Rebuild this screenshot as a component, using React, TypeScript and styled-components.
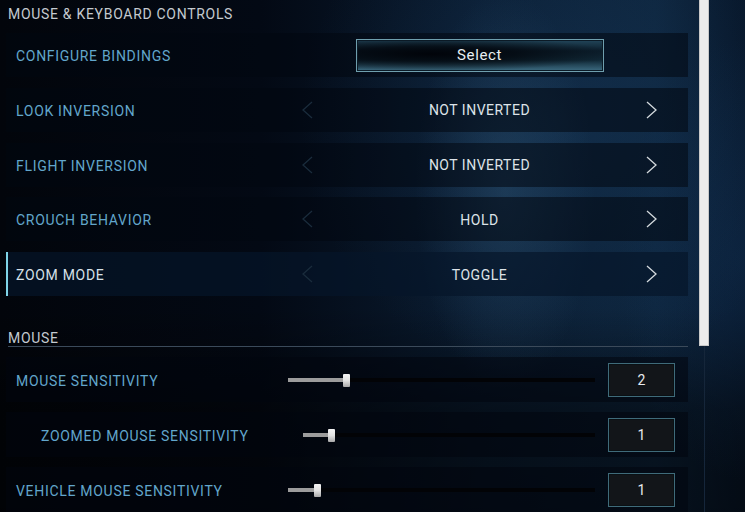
import React from "react"
import styled, { createGlobalStyle } from "styled-components"

const GlobalStyle = createGlobalStyle`
  html, body {
    margin: 0;
    padding: 0;
    background: #02050b;
  }
  * {
    box-sizing: border-box;
  }
`

type Selector = { label: string; value: string; active?: boolean }
type SliderSetting = { label: string; value: number; indent?: boolean }

const selectors: Selector[] = [
  { label: "LOOK INVERSION", value: "NOT INVERTED" },
  { label: "FLIGHT INVERSION", value: "NOT INVERTED" },
  { label: "CROUCH BEHAVIOR", value: "HOLD" },
  { label: "ZOOM MODE", value: "TOGGLE", active: true },
]

const sliders: SliderSetting[] = [
  { label: "MOUSE SENSITIVITY", value: 2 },
  { label: "ZOOMED MOUSE SENSITIVITY", value: 1, indent: true },
  { label: "VEHICLE MOUSE SENSITIVITY", value: 1 },
]

const Chevron = ({ dir, dim }: { dir: "left" | "right"; dim?: boolean }) => (
  <svg width="11" height="18" viewBox="0 0 11 18">
    <path
      d={dir === "right" ? "M1 1 L10 9 L1 17" : "M10 1 L1 9 L10 17"}
      fill="none"
      stroke={dim ? "#1a2c3c" : "#d4dade"}
      strokeWidth="1.3"
    />
  </svg>
)

const App = () => {
  return (
    <Page>
      <GlobalStyle />
      <Panel>
        <SectionTitle>MOUSE &amp; KEYBOARD CONTROLS</SectionTitle>
        <RowList>
          <Row>
            <Label>CONFIGURE BINDINGS</Label>
            <SelectButton>Select</SelectButton>
          </Row>
          {selectors.map((s) => (
            <Row key={s.label} $active={s.active}>
              <Label $active={s.active}>{s.label}</Label>
              <Chevron dir="left" dim />
              <Value>{s.value}</Value>
              <Chevron dir="right" />
            </Row>
          ))}
        </RowList>
        <SubTitle>MOUSE</SubTitle>
        <RowList $gap={10}>
          {sliders.map((s) => (
            <SliderRow key={s.label} $indent={s.indent}>
              <Label $indent={s.indent}>{s.label}</Label>
              <Track>
                <Fill style={{ width: `${s.value * 9.5}%` }}>
                  <Thumb />
                </Fill>
              </Track>
              <NumberBox>{s.value}</NumberBox>
            </SliderRow>
          ))}
        </RowList>
      </Panel>
      <ScrollColumn>
        <ScrollThumb />
        <ScrollTrack />
      </ScrollColumn>
    </Page>
  )
}

const Page = styled.div`
  width: 745px;
  height: 512px;
  overflow: hidden;
  display: flex;
  font-family: Roboto, "Liberation Sans", sans-serif;
  background:
    radial-gradient(ellipse 90px 200px at 505px 190px, rgba(60, 105, 140, 0.3), transparent 100%),
    radial-gradient(ellipse 260px 260px at 560px 120px, rgba(30, 70, 110, 0.32), transparent 100%),
    radial-gradient(ellipse 120px 220px at 740px 260px, rgba(20, 55, 95, 0.35), transparent 100%),
    linear-gradient(180deg, transparent 0%, transparent 60%, rgba(0, 0, 0, 0.45) 80%, rgba(0, 0, 0, 0.5) 100%),
    linear-gradient(90deg, #02050b 0%, #030914 35%, #0a1c31 65%, #0d243c 88%, #071629 100%);
`

const Panel = styled.div`
  width: 682px;
  margin-left: 6px;
  display: flex;
  flex-direction: column;
`

const SectionTitle = styled.div`
  height: 34px;
  padding: 6px 2px 0;
  font-size: 14px;
  line-height: 16px;
  letter-spacing: 0.7px;
  color: #c4cad0;
`

const SubTitle = styled.div`
  margin: 33px 0 10px 2px;
  padding: 1px 0 0;
  height: 18px;
  font-size: 14px;
  line-height: 16px;
  letter-spacing: 0.7px;
  color: #c4cad0;
  border-bottom: 1px solid #3b4a5a;
`

const RowList = styled.div<{ $gap?: number }>`
  display: flex;
  flex-direction: column;
  gap: ${({ $gap }) => $gap ?? 10.75}px;
`

const Row = styled.div<{ $active?: boolean }>`
  height: 44px;
  display: grid;
  grid-template-columns: 294px 11px 1fr 11px;
  align-items: center;
  padding-right: 31px;
  background: ${({ $active }) =>
    $active ? "rgba(6, 22, 42, 0.7)" : "rgba(2, 7, 16, 0.55)"};
  border-left: 2px solid ${({ $active }) => ($active ? "#7fd3e6" : "transparent")};
`

const Label = styled.div<{ $active?: boolean; $indent?: boolean }>`
  padding: 2px 0 0 ${({ $indent }) => ($indent ? 33 : 8)}px;
  font-size: 14px;
  letter-spacing: 0.7px;
  color: ${({ $active }) => ($active ? "#d6e0e8" : "#62a6cb")};
  white-space: nowrap;
`

const Value = styled.div`
  padding-top: 1px;
  text-align: center;
  font-size: 14px;
  letter-spacing: 0.5px;
  color: #dde3e8;
`

const SelectButton = styled.div`
  grid-column: 2 / 5;
  justify-self: center;
  width: 248px;
  height: 33px;
  display: flex;
  align-items: center;
  justify-content: center;
  font-size: 15px;
  letter-spacing: 0.6px;
  color: #e8eef2;
  border: 1px solid #6f9fae;
  box-shadow: inset 0 0 0 1px #0b1a26;
  background:
    radial-gradient(ellipse 75% 55% at 30% 45%, #01040a 0%, rgba(1, 4, 10, 0.7) 45%, transparent 100%),
    linear-gradient(180deg, #22465a 0%, #0c1e2c 35%, #102836 65%, #3d6c82 100%);
`

const SliderRow = styled.div<{ $indent?: boolean }>`
  height: 45px;
  display: grid;
  grid-template-columns: ${({ $indent }) => ($indent ? 282 : 267)}px 1fr 67px;
  column-gap: 13px;
  align-items: center;
  padding-right: 13px;
  border-left: 2px solid transparent;
  background: rgba(2, 6, 14, 0.55);
`

const Track = styled.div`
  height: 4px;
  background: #020306;
  display: flex;
`

const Fill = styled.div`
  height: 4px;
  background: #9c9c9c;
  position: relative;
`

const Thumb = styled.div`
  position: absolute;
  right: -4px;
  top: -4px;
  width: 7px;
  height: 13px;
  border-radius: 1px;
  background: linear-gradient(180deg, #f4f4f4 0%, #e2e2e2 50%, #a8a8a8 100%);
`

const NumberBox = styled.div`
  height: 34px;
  display: flex;
  align-items: center;
  justify-content: center;
  font-size: 14px;
  color: #e6eaee;
  background: #121519;
  border: 1px solid #3f6b7a;
  box-shadow: inset 0 0 0 1px #0a1014;
`

const ScrollColumn = styled.div`
  width: 10px;
  margin-left: 11px;
  display: flex;
  flex-direction: column;
  align-items: center;
`

const ScrollThumb = styled.div`
  width: 10px;
  height: 346px;
  background: #ececec;
  border: 1px solid #c8c8c8;
  border-top: none;
`

const ScrollTrack = styled.div`
  flex: 1;
  width: 1px;
  background: #15263a;
`

export default App
